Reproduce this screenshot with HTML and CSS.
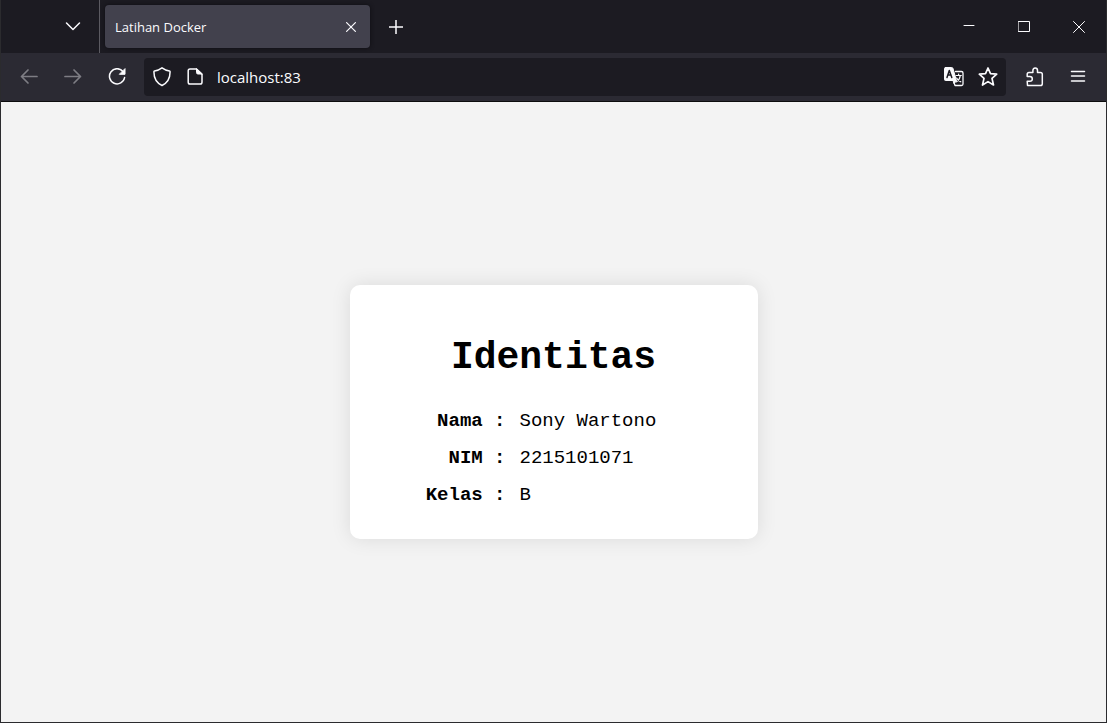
FILE: index.html
```html
<!DOCTYPE html>
<html lang="id">
<head>
<meta charset="utf-8">
<title>Latihan Docker</title>
<link rel="stylesheet" href="styles.css">
</head>
<body>
<div class="browser">
  <header class="titlebar">
    <div class="tab-list">
      <button class="icon-button" aria-label="Daftar tab"><svg width="16" height="16" viewBox="0 0 16 16"><path d="M1.500 4L8 10.500L14.500 4"/></svg></button>
    </div>
    <div class="tab">
      <span class="tab-title">Latihan Docker</span>
      <button class="icon-button tab-close" aria-label="Tutup tab"><svg width="10" height="10" viewBox="0 0 10 10"><path d="M.6.600L9.400 9.400M9.400.600L.6 9.400" stroke-width="1.200"/></svg></button>
    </div>
    <button class="icon-button new-tab" aria-label="Tab baru"><svg width="14" height="14" viewBox="0 0 14 14"><path d="M7 0V14M0 7H14"/></svg></button>
    <div class="window-controls">
      <button class="icon-button" aria-label="Perkecil"><svg width="12" height="12" viewBox="0 0 12 12"><path d="M1 4.500H11" stroke-width="1"/></svg></button>
      <button class="icon-button" aria-label="Perbesar"><svg width="12" height="12" viewBox="0 0 12 12"><path d="M.5.500H11.500V10.500H.5Z" stroke-width="1"/></svg></button>
      <button class="icon-button" aria-label="Tutup"><svg width="12" height="12" viewBox="0 0 12 12"><path d="M.5.500L11.500 11.500M11.500.500L.5 11.500" stroke-width="1"/></svg></button>
    </div>
  </header>
  <nav class="toolbar">
    <div class="navigation">
      <button class="icon-button" disabled aria-label="Kembali"><svg width="18" height="18" viewBox="0 0 18 18"><path d="M17 8.500H1.500M8 2L1.500 8.500L8 15" stroke-width="1.700"/></svg></button>
      <button class="icon-button" disabled aria-label="Maju"><svg width="18" height="18" viewBox="0 0 18 18"><path d="M1 8.500H16.500M10 2L16.500 8.500L10 15" stroke-width="1.700"/></svg></button>
      <button class="icon-button" aria-label="Muat ulang"><svg width="18" height="18" viewBox="0 0 18 18"><path d="M15 3.500A7.600 7.600 0 1 0 16.600 9.500"/><path class="solid" d="M17 1V6.300H11.700Z"/></svg></button>
    </div>
    <div class="address-bar">
      <svg width="18" height="20" viewBox="0 0 18 20"><path d="M9 .8C6.500 2.600 3.800 3.600 1.500 4Q.9 4.100.9 4.800C.9 11.800 3.600 16 9 18.500C14.400 16 17.100 11.800 17.100 4.800Q17.100 4.100 16.500 4C14.200 3.600 11.500 2.600 9 .8Z"/></svg>
      <svg class="page-icon" width="16" height="18" viewBox="0 0 16 18"><path d="M9.500 1H3Q1.200 1 1.200 2.800V14.200Q1.200 16 3 16H13.200Q15 16 15 14.200V6.500Z"/><path class="solid" d="M9.500 1V4.500Q9.500 6 11 6H15Z"/></svg>
      <input class="address" type="text" value="localhost:83" aria-label="Alamat">
      <button class="icon-button" aria-label="Terjemahkan"><svg width="20" height="20" viewBox="0 0 20 20"><path class="solid" d="M1.500.500H7.500Q8.700.500 9 1.500L12.500 14L10 16.500L9 13.500H1.500Q.5 13.500.5 12.500V1.500Q.5.500 1.500.500Z"/><path class="cutout" d="M3 10.500L5.300 3.500L7.800 10.500M4 8H7"/><path d="M11.500 4.500H17.500Q19 4.500 19 6V17Q19 18.500 17.500 18.500H11L10 15.500" stroke-width="1.300"/><path d="M12 8.500H17.300M14.600 7V8.500M12.600 11C13.500 13 15 14 16.800 14.800M16.300 8.500C15.800 12 14.500 13.500 12.600 14.800" stroke-width="1.200"/></svg></button>
      <button class="icon-button" aria-label="Tandai halaman"><svg width="20" height="20" viewBox="0 0 20 20"><path d="M10 1L12.500 6.700L18.700 7.200L14 11.400L15.500 18L10 14.600L4.500 18L6 11.400L1.300 7.200L7.500 6.700Z" stroke-width="1.700"/></svg></button>
    </div>
    <div class="toolbar-actions">
      <button class="icon-button" aria-label="Ekstensi"><svg width="18" height="20" viewBox="0 0 18 20"><path d="M1.500 18.500H14.500Q16.300 18.500 16.300 16.700V7.300Q16.300 5.500 14.500 5.500H11.500V3.500Q11.500 1.100 9.200 1.100Q6.900 1.100 6.900 3.500V5.500H3Q1.200 5.500 1.200 7.300V9.500H3.800Q6.300 9.500 6.300 12Q6.300 14.300 3.800 14.300H1.200Z"/></svg></button>
      <button class="icon-button" aria-label="Menu"><svg width="16" height="14" viewBox="0 0 16 14"><path d="M1.500 1.500H14.500M1.500 6H14.500M1.500 11H14.500" stroke-width="1.500"/></svg></button>
    </div>
  </nav>
  <main class="page">
    <section class="card">
      <h1 class="card-title">Identitas</h1>
      <table class="details">
        <tbody>
          <tr><th scope="row">Nama :</th><td>Sony Wartono</td></tr>
          <tr><th scope="row">NIM :</th><td>2215101071</td></tr>
          <tr><th scope="row">Kelas :</th><td>B</td></tr>
        </tbody>
      </table>
    </section>
  </main>
</div>
</body>
</html>
```
FILE: styles.css
```css
* {
  box-sizing: border-box;
}

body {
  margin: 0;
  font-family: "Open Sans", "Noto Sans", sans-serif;
  color: #fbfbfe;
}

.browser {
  display: flex;
  flex-direction: column;
  min-height: 100vh;
  border: solid #2b2b2e;
  border-width: 0 1px 1px;
  background: #f3f3f3;
}

svg {
  display: block;
  flex: none;
  fill: none;
  stroke: currentColor;
  stroke-width: 1.5;
  stroke-linejoin: round;
  stroke-linecap: round;
}

.solid {
  fill: currentColor;
  stroke-width: 1;
}

.cutout {
  stroke: #1c1b22;
}

.icon-button {
  display: flex;
  align-items: center;
  justify-content: center;
  padding: 0;
  border: 0;
  background: none;
  color: inherit;
}

.icon-button:disabled {
  color: #7e7d84;
}

.titlebar {
  display: flex;
  align-items: center;
  height: 53px;
  background: #1c1b22;
}

.tab-list {
  display: flex;
  align-items: center;
  justify-content: flex-end;
  width: 99px;
  height: 100%;
  padding-right: 18px;
  border-right: 1px solid #5b5a61;
}

.tab {
  display: flex;
  align-items: center;
  justify-content: space-between;
  width: 265px;
  height: 43px;
  margin-left: 5px;
  padding: 0 14px 0 10px;
  border-radius: 4px;
  background: #42414d;
  box-shadow: 0 0 4px #0e0d12;
}

.tab-title {
  font-size: 13px;
}

.new-tab {
  margin-left: 19px;
}

.window-controls {
  display: flex;
  gap: 43px;
  margin-left: auto;
  padding-right: 21px;
}

.toolbar {
  display: flex;
  align-items: center;
  height: 49px;
  padding-bottom: 1px;
  border-bottom: 1px solid #0c0c0d;
  background: #2b2a33;
}

.navigation {
  display: flex;
  gap: 26px;
  padding: 0 18px 0 19px;
}

.address-bar {
  display: flex;
  flex: 1;
  align-items: center;
  gap: 14px;
  height: 38px;
  padding: 0 8px 0 9px;
  border-radius: 4px;
  background: #1c1b22;
}

.page-icon {
  margin-left: 2px;
}

.address {
  flex: 1;
  min-width: 0;
  padding: 0;
  border: 0;
  outline: 0;
  background: none;
  color: inherit;
  font: 15px "Open Sans", "Noto Sans", sans-serif;
}

.toolbar-actions {
  display: flex;
  align-items: center;
  gap: 26px;
  padding: 0 20px;
}

.page {
  display: flex;
  flex: 1;
  align-items: center;
  justify-content: center;
  color: #000;
  font-family: "Liberation Mono", "Courier New", monospace;
}

.card {
  width: 408px;
  max-width: 100%;
  padding: 50px 40px 25px;
  border-radius: 10px;
  background: #fff;
  box-shadow: 0 0 20px rgba(0, 0, 0, 0.1);
}

.card-title {
  margin: 0 0 22px;
  font-size: 38px;
  line-height: 46px;
  text-align: center;
}

.details {
  width: 100%;
  border-collapse: collapse;
  font-size: 19px;
  line-height: 21px;
}

.details th,
.details td {
  padding: 8px 0;
}

.details th {
  width: 116px;
  text-align: right;
}

.details td {
  padding-left: 14px;
}
```
